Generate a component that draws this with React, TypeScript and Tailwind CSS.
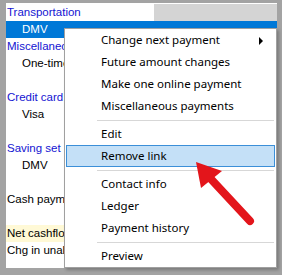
import { ReactNode } from "react";

type Row = { text: string; kind: "group" | "item" | "plain" | "blank"; selected?: boolean; note?: boolean };

const rows: Row[] = [
  { text: "Transportation", kind: "group" },
  { text: "DMV", kind: "item", selected: true },
  { text: "Miscellaneous", kind: "group" },
  { text: "One-time payments", kind: "item" },
  { text: "", kind: "blank" },
  { text: "Credit card payments", kind: "group" },
  { text: "Visa", kind: "item" },
  { text: "", kind: "blank" },
  { text: "Saving set asides", kind: "group" },
  { text: "DMV", kind: "item" },
  { text: "", kind: "blank" },
  { text: "Cash payments", kind: "plain" },
  { text: "", kind: "blank" },
  { text: "Net cashflow", kind: "plain", note: true },
  { text: "Chg in unallocated", kind: "plain" },
];

function MenuItem({ children, active, sub }: { children: ReactNode; active?: boolean; sub?: boolean }) {
  return (
    <div
      className={`relative h-[22px] mx-[1px] flex items-center pl-[34px] border ${
        active ? "bg-[#c4e0f7] border-[#3b8fd8]" : "border-transparent"
      }`}
    >
      {children}
      {sub && (
        <span className="absolute right-[11px] top-[7px] w-0 h-0 border-y-[4px] border-y-transparent border-l-[4px] border-l-black" />
      )}
    </div>
  );
}

function Sep() {
  return (
    <div className="h-[6px] flex items-center pl-[32px] pr-[2px]">
      <div className="h-px w-full bg-[#d7d7d7]" />
    </div>
  );
}

export default function App() {
  return (
    <div className="w-[282px] h-[275px] bg-[#a3a3a3] pt-[3px] pl-[6px] pr-[5px] pb-[7px] relative overflow-hidden">
      <div className="bg-white h-full pt-px text-[11.5px] font-['Liberation_Sans',Arial,sans-serif]">
        {rows.map((r, i) => (
          <div
            key={i}
            className={`h-[17px] flex items-center ${r.selected ? "bg-[#0078d7] text-white" : ""}`}
          >
            {i === 0 ? (
              <>
                <div className="w-[148px] pl-[1px] text-[#1414d2]">{r.text}</div>
                <div className="flex-1 h-full bg-[#d4d4d4]" />
              </>
            ) : (
              <div
                className={`h-full w-[58px] overflow-hidden flex items-center whitespace-nowrap ${r.note ? "bg-[#fff9d6]" : ""} ${
                  r.kind === "item" ? "pl-[16px]" : "pl-[1px]"
                } ${r.kind === "group" ? "text-[#1414d2]" : r.selected ? "text-white" : "text-black"}`}
              >
                {r.text}
              </div>
            )}
          </div>
        ))}
      </div>

      <div className="absolute left-[64px] top-[28px] w-[213px] bg-white border border-[#a0a0a0] shadow-[2px_2px_3px_rgba(0,0,0,0.25)] text-[11.5px] text-black font-['Noto_Sans',sans-serif]">
        <MenuItem sub>Change next payment</MenuItem>
        <MenuItem>Future amount changes</MenuItem>
        <MenuItem>Make one online payment</MenuItem>
        <MenuItem>Miscellaneous payments</MenuItem>
        <Sep />
        <MenuItem>Edit</MenuItem>
        <MenuItem active>Remove link</MenuItem>
        <Sep />
        <MenuItem>Contact info</MenuItem>
        <MenuItem>Ledger</MenuItem>
        <MenuItem>Payment history</MenuItem>
        <Sep />
        <MenuItem>Preview</MenuItem>
      </div>

      <svg className="absolute left-0 top-0 pointer-events-none" width="282" height="275" viewBox="0 0 282 275">
        <line x1="250" y1="221" x2="210" y2="178" stroke="#e3151b" strokeWidth="8" strokeLinecap="round" />
        <polygon points="196,162 222,171 201,188" fill="#e3151b" />
      </svg>
    </div>
  );
}
